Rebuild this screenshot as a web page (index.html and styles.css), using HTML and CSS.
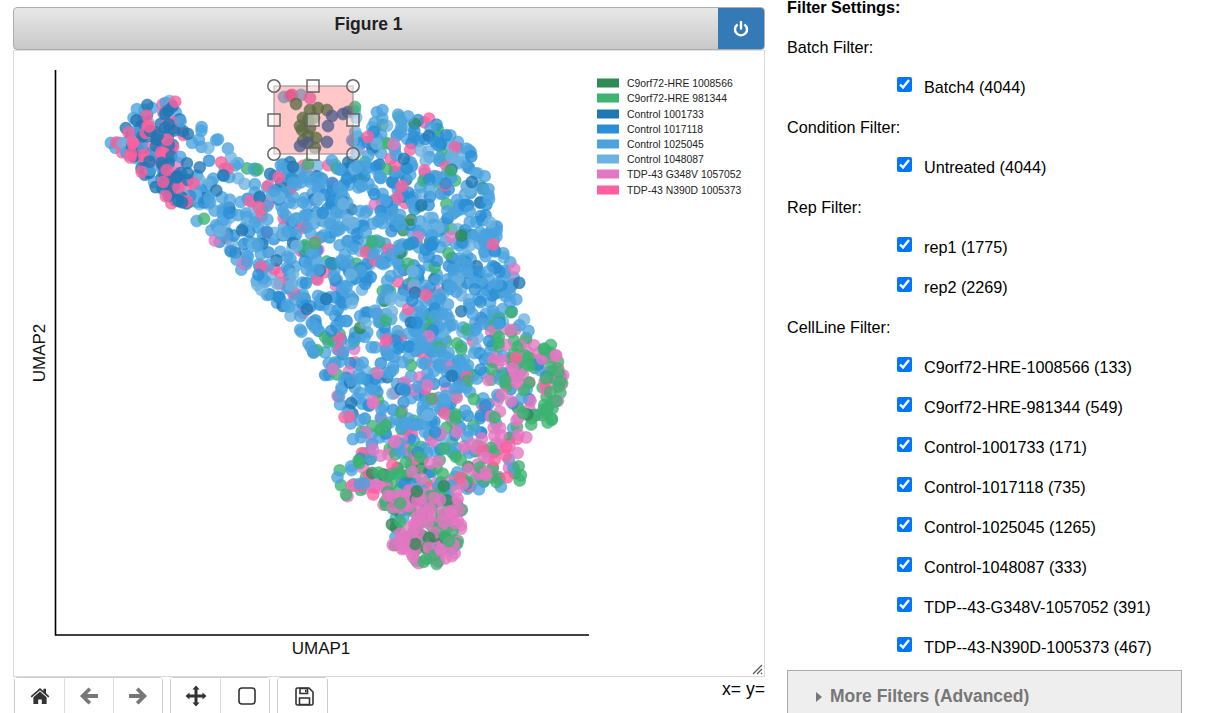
FILE: index.html
```html
<!DOCTYPE html>
<html lang="en">
<head>
  <meta charset="UTF-8" />
  <title>Figure 1</title>
  <link rel="stylesheet" href="styles.css">
</head>
<body>
  <div class="page">
    <div class="figure">
      <div class="figure-head">
        <div class="figure-title">Figure 1</div>
        <button class="power-btn" title="Stop">
          <svg width="16" height="16" viewBox="0 0 16 16"><path d="M4.6 3.4a6 6 0 1 0 6.8 0" fill="none" stroke="#fff" stroke-width="2.4"/><path d="M8 1v6.5" stroke="#fff" stroke-width="2.4" stroke-linecap="round"/></svg>
        </button>
      </div>

      <div class="figure-body">
        <svg id="plot" class="plot" width="750" height="625" viewBox="14 51 750 625">
          <g id="points"></g>
          <path d="M55.5 70V635H589" fill="none" stroke="#000" stroke-width="1.6"/>
          <text class="axis-label" x="321" y="654" text-anchor="middle">UMAP1</text>
          <text class="axis-label" transform="translate(45 353) rotate(-90)" text-anchor="middle">UMAP2</text>

          <g id="legend"></g>

          <rect x="274" y="86" width="79" height="68" fill="#ff0000" fill-opacity="0.22" stroke="#888" stroke-width="1"/>
          <g class="handles">
            <circle cx="274" cy="86" r="6.2"/>
            <circle cx="353" cy="86" r="6.2"/>
            <circle cx="274" cy="154" r="6.2"/>
            <circle cx="353" cy="154" r="6.2"/>
            <rect x="307" y="80" width="12" height="12"/>
            <rect x="268" y="114" width="12" height="12"/>
            <rect x="307" y="114" width="12" height="12"/>
            <rect x="347" y="114" width="12" height="12"/>
            <rect x="307" y="148" width="12" height="12"/>
          </g>
        </svg>
        <svg class="grip" width="11" height="11" viewBox="0 0 11 11"><path d="M1 10 10 1M5 10 10 5M9 10 10 9" stroke="#555" stroke-width="1.2"/></svg>
      </div>

      <div class="figure-foot">
        <div class="toolbar">
          <div class="tool-group">
            <button class="tool">
              <svg width="20" height="18" viewBox="0 0 20 18"><path d="M10 1 .6 9.2l1.1 1.2L10 3.2l8.3 7.2 1.1-1.2L16 6.3V1.8h-2.6v2.2z" fill="#333"/><path d="M10 4.6 3.4 10.3V17h4.8v-4.6h3.6V17h4.8v-6.7z" fill="#333"/></svg>
            </button>
            <button class="tool">
              <svg width="20" height="20" viewBox="0 0 20 20"><path d="M9.500 1.500 1 10l8.500 8.500 2.600-2.600-4-4H19V8.100H8.100l4-4z" fill="#777"/></svg>
            </button>
            <button class="tool">
              <svg width="20" height="20" viewBox="0 0 20 20"><path d="M10.500 1.500 19 10l-8.500 8.500-2.600-2.600 4-4H1V8.100h10.900l-4-4z" fill="#777"/></svg>
            </button>
          </div>
          <div class="tool-group">
            <button class="tool">
              <svg width="22" height="22" viewBox="0 0 22 22"><path d="M11 .5 14.600 4.500H12.500V9.500H17.500V7.400L21.500 11 17.500 14.600V12.500H12.500V17.500H14.600L11 21.500 7.400 17.500H9.500V12.500H4.500V14.600L.5 11 4.500 7.400V9.500H9.500V4.500H7.400z" fill="#333"/></svg>
            </button>
            <button class="tool tool-shift">
              <svg width="18" height="18" viewBox="0 0 18 18"><rect x="1" y="1" width="16" height="16" rx="3" fill="none" stroke="#333" stroke-width="1.600"/></svg>
            </button>
          </div>
          <div class="tool-group">
            <button class="tool tool-shift">
              <svg width="19" height="19" viewBox="0 0 19 19"><path d="M1 2.500A1.500 1.500 0 0 1 2.500 1H14l4 4v11.500a1.500 1.500 0 0 1-1.500 1.500h-14A1.500 1.500 0 0 1 1 16.500z" fill="none" stroke="#333" stroke-width="1.600"/><path d="M5 1.500h7.500v5H5zM4.500 11h10v6.500h-10z" fill="none" stroke="#333" stroke-width="1.600"/><path d="M10 2.800h1.500v2.500H10z" fill="#333"/></svg>
            </button>
          </div>
        </div>
        <div class="coords">x= y=</div>
      </div>
    </div>

    <div class="filters">
      <div class="filters-title">Filter Settings:</div>

      <div class="filter-label">Batch Filter:</div>
      <label class="check-row"><input type="checkbox" checked>Batch4 (4044)</label>

      <div class="filter-label">Condition Filter:</div>
      <label class="check-row"><input type="checkbox" checked>Untreated (4044)</label>

      <div class="filter-label">Rep Filter:</div>
      <label class="check-row"><input type="checkbox" checked>rep1 (1775)</label>
      <label class="check-row"><input type="checkbox" checked>rep2 (2269)</label>

      <div class="filter-label">CellLine Filter:</div>
      <label class="check-row"><input type="checkbox" checked>C9orf72-HRE-1008566 (133)</label>
      <label class="check-row"><input type="checkbox" checked>C9orf72-HRE-981344 (549)</label>
      <label class="check-row"><input type="checkbox" checked>Control-1001733 (171)</label>
      <label class="check-row"><input type="checkbox" checked>Control-1017118 (735)</label>
      <label class="check-row"><input type="checkbox" checked>Control-1025045 (1265)</label>
      <label class="check-row"><input type="checkbox" checked>Control-1048087 (333)</label>
      <label class="check-row"><input type="checkbox" checked>TDP--43-G348V-1057052 (391)</label>
      <label class="check-row"><input type="checkbox" checked>TDP--43-N390D-1005373 (467)</label>

      <div class="more-filters">
        <span class="more-arrow"></span>More Filters (Advanced)
      </div>
    </div>
  </div>

  <script src="plot.js"></script>
</body>
</html>
```

FILE: styles.css
```css
html, body {
  margin: 0;
  height: 713px;
  overflow: hidden;
}

body {
  font-family: "Liberation Sans", Arial, sans-serif;
  font-size: 16.200px;
  color: #000;
  background: #fff;
}

.page {
  display: flex;
  align-items: flex-start;
  padding-left: 13px;
}

.figure {
  width: 752px;
  padding-top: 7px;
  flex-shrink: 0;
}

.figure-head {
  display: flex;
  height: 43px;
  box-sizing: border-box;
  background: linear-gradient(#e8e8e8, #c8c8c8);
  border: 1px solid #adadad;
  border-radius: 4px;
  overflow: hidden;
}

.figure-title {
  flex: 1;
  text-align: center;
  font-size: 17.500px;
  font-weight: bold;
  line-height: 33px;
  color: #222;
  padding-left: 5px;
}

.power-btn {
  width: 46px;
  border: none;
  background: #337ab7;
  padding: 0;
  display: flex;
  align-items: center;
  justify-content: center;
}

.figure-body {
  position: relative;
  height: 627px;
  box-sizing: border-box;
  border: 1px solid #d9d9d9;
  border-top: 1px solid #e0e0e0;
}

.plot {
  display: block;
}

.axis-label {
  font-size: 17px;
  fill: #111;
}

.legend-text {
  font-size: 10.400px;
  fill: #222;
}

.handles circle,
.handles rect {
  fill: #fff;
  fill-opacity: 0.45;
  stroke: #666;
  stroke-width: 1.500;
}

.grip {
  position: absolute;
  right: 1px;
  bottom: 1px;
}

.figure-foot {
  display: flex;
  justify-content: space-between;
  align-items: flex-start;
}

.toolbar {
  display: flex;
  gap: 7px;
  padding-left: 1px;
}

.tool-group {
  display: flex;
  border: 1px solid #ccc;
  border-bottom: none;
  border-radius: 4px 4px 0 0;
  height: 40px;
}

.tool {
  width: 49px;
  border: none;
  border-left: 1px solid #ddd;
  background: #fff;
  padding: 0 0 4px;
  display: flex;
  align-items: center;
  justify-content: center;
}

.tool:first-child {
  border-left: none;
}

.tool-shift {
  padding-left: 4px;
}

.coords {
  padding-top: 3px;
  font-size: 17.600px;
  line-height: 18px;
}

.filters {
  margin-left: 22px;
  width: 395px;
}

.filters-title {
  font-weight: bold;
  line-height: 14px;
  height: 27px;
}

.filter-label {
  height: 40px;
  line-height: 40px;
}

.check-row {
  display: flex;
  align-items: center;
  height: 40px;
  padding-left: 110px;
}

.check-row input {
  width: 15px;
  height: 15px;
  margin: -6px 12px 0 0;
}

.more-filters {
  margin-top: 3px;
  height: 60px;
  box-sizing: border-box;
  background: #eee;
  border: 1px solid #aaa;
  padding: 14px 0 0 28px;
  font-size: 17.500px;
  line-height: 22px;
  font-weight: bold;
  color: #777;
}

.more-arrow {
  display: inline-block;
  border-left: 6px solid #777;
  border-top: 5px solid transparent;
  border-bottom: 5px solid transparent;
  margin-right: 8px;
}
```

FILE: plot.js
```js
// scatter + legend for the figure, points come from a seeded generator
var NS = 'http://www.w3.org/2000/svg';

var COLORS = {
  c1: '#2e8b57',
  c2: '#3cb371',
  b1: '#1f77b4',
  b2: '#2b8fd6',
  b3: '#4aa3df',
  b4: '#6db3e0',
  o: '#e377c2',
  p: '#ff5f9e'
};

var LEGEND = [
  ['c1', 'C9orf72-HRE 1008566', 83],
  ['c2', 'C9orf72-HRE 981344', 98],
  ['b1', 'Control 1001733', 114],
  ['b2', 'Control 1017118', 129],
  ['b3', 'Control 1025045', 144],
  ['b4', 'Control 1048087', 159],
  ['o', 'TDP-43 G348V 1057052', 174],
  ['p', 'TDP-43 N390D 1005373', 190]
];

var OUTLINE = [
  [108,143],[124,130],[136,108],[160,100],[176,101],[180,114],[190,124],[215,122],
  [226,135],[242,167],[262,168],[285,162],[330,160],[347,112],[372,106],[402,115],
  [440,118],[455,135],[484,165],[490,195],[500,240],[520,280],[525,315],[536,340],
  [558,346],[566,380],[553,420],[524,440],[523,482],[490,490],[460,490],[464,530],
  [458,552],[440,565],[406,565],[392,545],[388,515],[376,495],[345,497],[328,503],
  [336,470],[353,465],[350,430],[337,400],[322,370],[302,335],[267,295],[237,270],
  [202,225],[172,205],[135,165]
];

// hand placed points of the arm inside the selection box
var ARM = [
  ['b4',284,97],['b4',290,96],['p',292,95],['b4',301,95],['c1',296,104],['c1',310,110],['c1',318,108],
  ['c1',327,110],['b1',332,116],['b1',343,114],['b1',348,112],['c1',303,118],['c1',308,120],['c1',314,118],
  ['c1',302,130],['c1',300,126],['c1',310,128],['c1',316,138],['c1',308,136],['c1',303,141],['b1',327,142],
  ['b1',300,146],['b1',308,143],['c1',315,148],['b1',328,126],['c2',355,107],['o',310,98]
];

var seed = 40441;
function rnd() {
  seed = (seed * 1664525 + 1013904223) % 4294967296;
  return seed / 4294967296;
}

function inside(x, y) {
  var hit = false;
  for (var i = 0, j = OUTLINE.length - 1; i < OUTLINE.length; j = i++) {
    var a = OUTLINE[i], b = OUTLINE[j];
    if ((a[1] > y) !== (b[1] > y) && x < (b[0] - a[0]) * (y - a[1]) / (b[1] - a[1]) + a[0]) hit = !hit;
  }
  return hit;
}

function pick(weights) {
  var r = rnd(), sum = 0;
  for (var k in weights) {
    sum += weights[k];
    if (r < sum) return k;
  }
  return 'b3';
}

function colorAt(x, y) {
  if (x < 190 && y < 215) return pick({ b1: .34, p: .3, b3: .2, b4: .14, o: .02 });
  if (y > 505) return pick({ o: .5, c2: .28, c1: .07, b3: .13, p: .02 });
  if (x < 390 && y > 465) return pick({ o: .42, c2: .2, c1: .05, b3: .23, p: .1 });
  if (x > 490 && y > 325) return pick({ o: .36, c2: .36, c1: .06, b3: .12, b2: .06, p: .04 });
  if (y > 440) return pick({ b3: .22, b2: .1, o: .27, c2: .28, c1: .05, p: .08 });
  if (y > 330) return pick({ b3: .46, b2: .2, b4: .08, c2: .11, o: .07, p: .07, b1: .01 });
  if (x < 300) return pick({ b3: .52, b2: .1, b4: .16, b1: .08, p: .1, c2: .02, o: .02 });
  return pick({ b3: .52, b2: .22, b4: .1, b1: .03, c2: .06, c1: .01, p: .04, o: .02 });
}

// ring comes from the stroke overlapping the fill, same as the real chart
function addCircle(parent, x, y, name) {
  var c = document.createElementNS(NS, 'circle');
  c.setAttribute('cx', x.toFixed(1));
  c.setAttribute('cy', y.toFixed(1));
  c.setAttribute('r', '5.8');
  c.setAttribute('fill', COLORS[name]);
  c.setAttribute('fill-opacity', '0.78');
  c.setAttribute('stroke', COLORS[name]);
  c.setAttribute('stroke-opacity', '0.6');
  c.setAttribute('stroke-width', '1.2');
  parent.appendChild(c);
}

function drawPoints() {
  var g = document.getElementById('points');
  var n = 0;
  while (n < 1900) {
    var x = 100 + rnd() * 470;
    var y = 95 + rnd() * 475;
    if (!inside(x, y)) continue;
    // thin parts of the cloud
    if (x > 178 && x < 240 && y < 175 && rnd() > 0.3) continue;
    if (x < 352 && x > 262 && y < 160 && y > 95) continue;
    addCircle(g, x, y, colorAt(x, y));
    n++;
  }
  // denser spots: left lobe and bottom blob
  for (var i = 0; i < 110; i++) {
    var lx = 108 + rnd() * 80, ly = 100 + rnd() * 105;
    if (inside(lx, ly)) addCircle(g, lx, ly, pick({ b1: .6, p: .3, b3: .1 }));
    var bx = 388 + rnd() * 78, by = 490 + rnd() * 76;
    if (inside(bx, by)) addCircle(g, bx, by, pick({ o: .72, c2: .18, c1: .1 }));
  }
  // green rim on the right bulge
  for (var k = 0; k < 22; k++) {
    var a = -1 + rnd() * 2;
    addCircle(g, 520 + 38 * Math.cos(a) + rnd() * 6, 378 + 38 * Math.sin(a) + rnd() * 6, pick({ c2: .6, c1: .2, o: .2 }));
  }
  ARM.forEach(function (p) {
    addCircle(g, p[1], p[2], p[0]);
  });
}

function drawLegend() {
  var g = document.getElementById('legend');
  LEGEND.forEach(function (row) {
    var r = document.createElementNS(NS, 'rect');
    r.setAttribute('x', 597);
    r.setAttribute('y', row[2] - 4.500);
    r.setAttribute('width', 22);
    r.setAttribute('height', 9);
    r.setAttribute('fill', COLORS[row[0]]);
    g.appendChild(r);
    var t = document.createElementNS(NS, 'text');
    t.setAttribute('x', 627);
    t.setAttribute('y', row[2] + 3.500);
    t.setAttribute('class', 'legend-text');
    t.textContent = row[1];
    g.appendChild(t);
  });
}

drawPoints();
drawLegend();
```
